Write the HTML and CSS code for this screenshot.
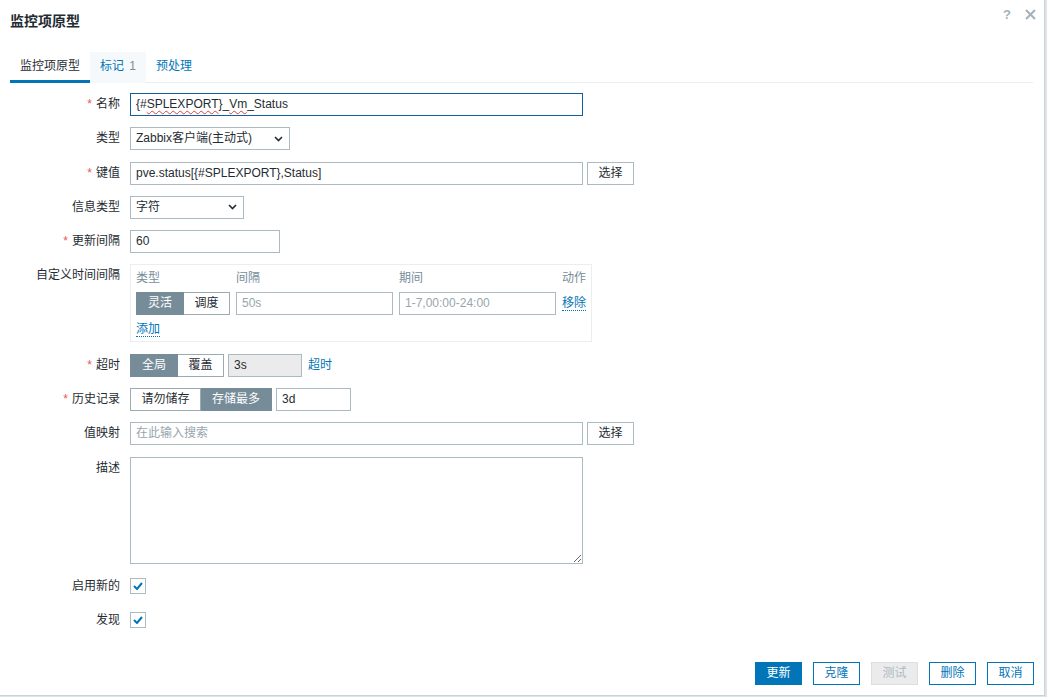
FILE: index.html
```html
<!DOCTYPE html>
<html lang="zh-CN">
	<head>
		<meta charset="utf-8"/>
		<title>监控项原型</title>
		<link rel="stylesheet" href="styles.css">
	</head>
	<body>
		<div class="dialog">
			<div class="head">
				<h4>监控项原型</h4>
				<div class="head-icons">
					<span class="help">?</span>
					<svg width="11" height="11" viewBox="0 0 11 11"><path d="M1 1L10 10M10 1L1 10" stroke="#a3b2ba" stroke-width="2"/></svg>
				</div>
			</div>

			<div class="tabs">
				<div class="tab active">监控项原型</div>
				<div class="tab hover">标记 <span class="count">1</span></div>
				<div class="tab">预处理</div>
			</div>

			<form class="form">
				<div class="row">
					<label class="lbl req">名称</label>
					<div class="input focus w-wide">{#<span class="typo">SPLEXPORT</span>}_<span class="typo">Vm</span>_Status</div>
				</div>
				<div class="row">
					<label class="lbl">类型</label>
					<div class="input select w-type">Zabbix客户端(主动式)
						<svg width="9" height="6" viewBox="0 0 9 6"><path d="M1 1L4.5 4.5L8 1" fill="none" stroke="#1f2c33" stroke-width="1.6"/></svg>
					</div>
				</div>
				<div class="row">
					<label class="lbl req">键值</label>
					<div class="input w-wide">pve.status[{#SPLEXPORT},Status]</div>
					<div class="btn-alt">选择</div>
				</div>
				<div class="row">
					<label class="lbl">信息类型</label>
					<div class="input select w-info">字符
						<svg width="9" height="6" viewBox="0 0 9 6"><path d="M1 1L4.5 4.5L8 1" fill="none" stroke="#1f2c33" stroke-width="1.6"/></svg>
					</div>
				</div>
				<div class="row">
					<label class="lbl req">更新间隔</label>
					<div class="input w-interval">60</div>
				</div>
				<div class="row">
					<label class="lbl">自定义时间间隔</label>
					<div class="intervals">
						<div class="iv-grid">
							<div class="th">类型</div>
							<div class="th">间隔</div>
							<div class="th">期间</div>
							<div class="th">动作</div>
							<div class="segment">
								<span class="seg on seg-a">灵活</span><span class="seg seg-b">调度</span>
							</div>
							<div class="input ph">50s</div>
							<div class="input ph">1-7,00:00-24:00</div>
							<a class="link dotted">移除</a>
						</div>
						<a class="link dotted add">添加</a>
					</div>
				</div>
				<div class="row">
					<label class="lbl req">超时</label>
					<div class="segment">
						<span class="seg on seg-a">全局</span><span class="seg seg-b">覆盖</span>
					</div>
					<div class="input disabled w-timeout">3s</div>
					<a class="link timeout">超时</a>
				</div>
				<div class="row">
					<label class="lbl req">历史记录</label>
					<div class="segment">
						<span class="seg seg-c">请勿储存</span><span class="seg on seg-c">存储最多</span>
					</div>
					<div class="input w-history">3d</div>
				</div>
				<div class="row">
					<label class="lbl">值映射</label>
					<div class="input ph w-wide">在此输入搜索</div>
					<div class="btn-alt">选择</div>
				</div>
				<div class="row">
					<label class="lbl">描述</label>
					<textarea class="desc"></textarea>
				</div>
				<div class="row">
					<label class="lbl">启用新的</label>
					<span class="check">
						<svg width="10" height="8" viewBox="0 0 10 8"><path d="M1 4L4 7L9 1" fill="none" stroke="#0275b8" stroke-width="2"/></svg>
					</span>
				</div>
				<div class="row">
					<label class="lbl">发现</label>
					<span class="check">
						<svg width="10" height="8" viewBox="0 0 10 8"><path d="M1 4L4 7L9 1" fill="none" stroke="#0275b8" stroke-width="2"/></svg>
					</span>
				</div>
			</form>

			<div class="footer">
				<div class="btn primary">更新</div>
				<div class="btn">克隆</div>
				<div class="btn off">测试</div>
				<div class="btn">删除</div>
				<div class="btn">取消</div>
			</div>
		</div>
	</body>
</html>
```

FILE: styles.css
```css
html, body {
	margin: 0;
	padding: 0;
	background: #dfe4e7;
	font-family: "Liberation Sans", Arial, "Noto Sans CJK SC", sans-serif;
	font-size: 12px;
	color: #1f2c33;
}

.dialog {
	width: 1045px;
	height: 696px;
	box-sizing: border-box;
	background: #fff;
	border-right: 1px solid #c9d2d7;
	border-bottom: 1px solid #c9d2d7;
	display: flex;
	flex-direction: column;
}

.head {
	display: flex;
	justify-content: space-between;
	height: 52px;
	box-sizing: border-box;
	padding: 12px 8px 0 10px;
}
.head h4 {
	margin: 0;
	font-size: 14px;
	line-height: 18px;
	font-weight: bold;
}
.head-icons {
	display: flex;
	align-items: center;
	gap: 14px;
	height: 12px;
	margin-top: -4px;
}
.help {
	color: #a3b2ba;
	font-weight: bold;
	font-size: 13px;
}

.tabs {
	display: flex;
	margin: 0 11px 0 10px;
	border-bottom: 1px solid #ebeef0;
}
.tab {
	padding: 0 10px;
	line-height: 28px;
	border-bottom: 3px solid transparent;
	margin-bottom: -1px;
	color: #0275b8;
}
.tab.active {
	color: #1f2c33;
	border-bottom-color: #0275b8;
}
.tab.hover {
	background: #f6f9fb;
}
.tab .count {
	color: #768d99;
	margin-left: 2px;
}

.form {
	display: flex;
	flex-direction: column;
	gap: 11.3px;
	padding-top: 10px;
}
.row {
	display: flex;
	align-items: flex-start;
}
.lbl {
	width: 120px;
	height: 23px;
	margin-right: 10px;
	text-align: right;
	line-height: 23px;
	flex-shrink: 0;
}
.lbl.req::before {
	content: '*';
	color: #e45959;
	margin-right: 4px;
}

.input {
	height: 23px;
	box-sizing: border-box;
	border: 1px solid #acbbc2;
	padding: 0 5px;
	line-height: 21px;
	background: #fff;
	white-space: nowrap;
	overflow: hidden;
}
.input.focus {
	border-color: #11609c;
}
.input.ph {
	color: #97a6ae;
}
.input.disabled {
	background: #ebebeb;
}
.typo {
	text-decoration: underline wavy #e04040;
	text-decoration-thickness: 1px;
	text-underline-offset: 2px;
}
.select {
	display: flex;
	justify-content: space-between;
	align-items: center;
	padding-right: 6px;
}

.w-wide { width: 453px; }
.w-type { width: 160px; }
.w-info { width: 114px; }
.w-interval { width: 150px; }
.w-timeout { width: 74px; margin-left: 4px; }
.w-history { width: 75px; margin-left: 4px; }

.btn-alt {
	width: 47px;
	height: 23px;
	box-sizing: border-box;
	margin-left: 4px;
	border: 1px solid #acbbc2;
	text-align: center;
	line-height: 21px;
	background: #fff;
}

.intervals {
	width: 462px;
	height: 78px;
	box-sizing: border-box;
	border: 1px solid #ebeef0;
	padding: 6px 5px 0 5px;
}
.iv-grid {
	display: grid;
	grid-template-columns: 94px 157px 157px auto;
	column-gap: 6px;
	row-gap: 6px;
	align-items: center;
}
.th {
	color: #768d99;
	line-height: 15px;
}

.segment {
	display: flex;
	height: 23px;
}
.seg {
	box-sizing: border-box;
	height: 23px;
	line-height: 21px;
	text-align: center;
	border: 1px solid #9aabb4;
	background: #fff;
}
.seg + .seg {
	border-left: none;
}
.seg.on {
	background: #768d99;
	border-color: #768d99;
	color: #fff;
}
.seg-a { width: 48px; }
.seg-b { width: 46px; }
.seg-c { width: 71px; }

.link {
	color: #0275b8;
	text-decoration: none;
}
.link.dotted {
	border-bottom: 1px dotted #0275b8;
	line-height: 14px;
	justify-self: start;
}
.add {
	display: inline-block;
	margin-top: 7px;
}
.timeout {
	margin-left: 6px;
	line-height: 23px;
}

.desc {
	display: block;
	width: 453px;
	height: 107px;
	box-sizing: border-box;
	border: 1px solid #acbbc2;
	margin: 0;
	padding: 4px 5px;
	font-family: inherit;
	font-size: 12px;
}

.check {
	width: 16px;
	height: 16px;
	box-sizing: border-box;
	margin-top: 3px;
	border: 1px solid #acbbc2;
	display: flex;
	align-items: center;
	justify-content: center;
}

.footer {
	margin-top: auto;
	display: flex;
	justify-content: flex-end;
	gap: 11px;
	padding: 0 10px 10px 0;
}
.btn {
	width: 47px;
	height: 23px;
	box-sizing: border-box;
	border: 1px solid #0275b8;
	color: #0275b8;
	background: #fff;
	text-align: center;
	line-height: 21px;
}
.btn.primary {
	background: #0275b8;
	color: #fff;
}
.btn.off {
	background: #ebebeb;
	border-color: #dcdfe1;
	color: #acbbc2;
}
```
